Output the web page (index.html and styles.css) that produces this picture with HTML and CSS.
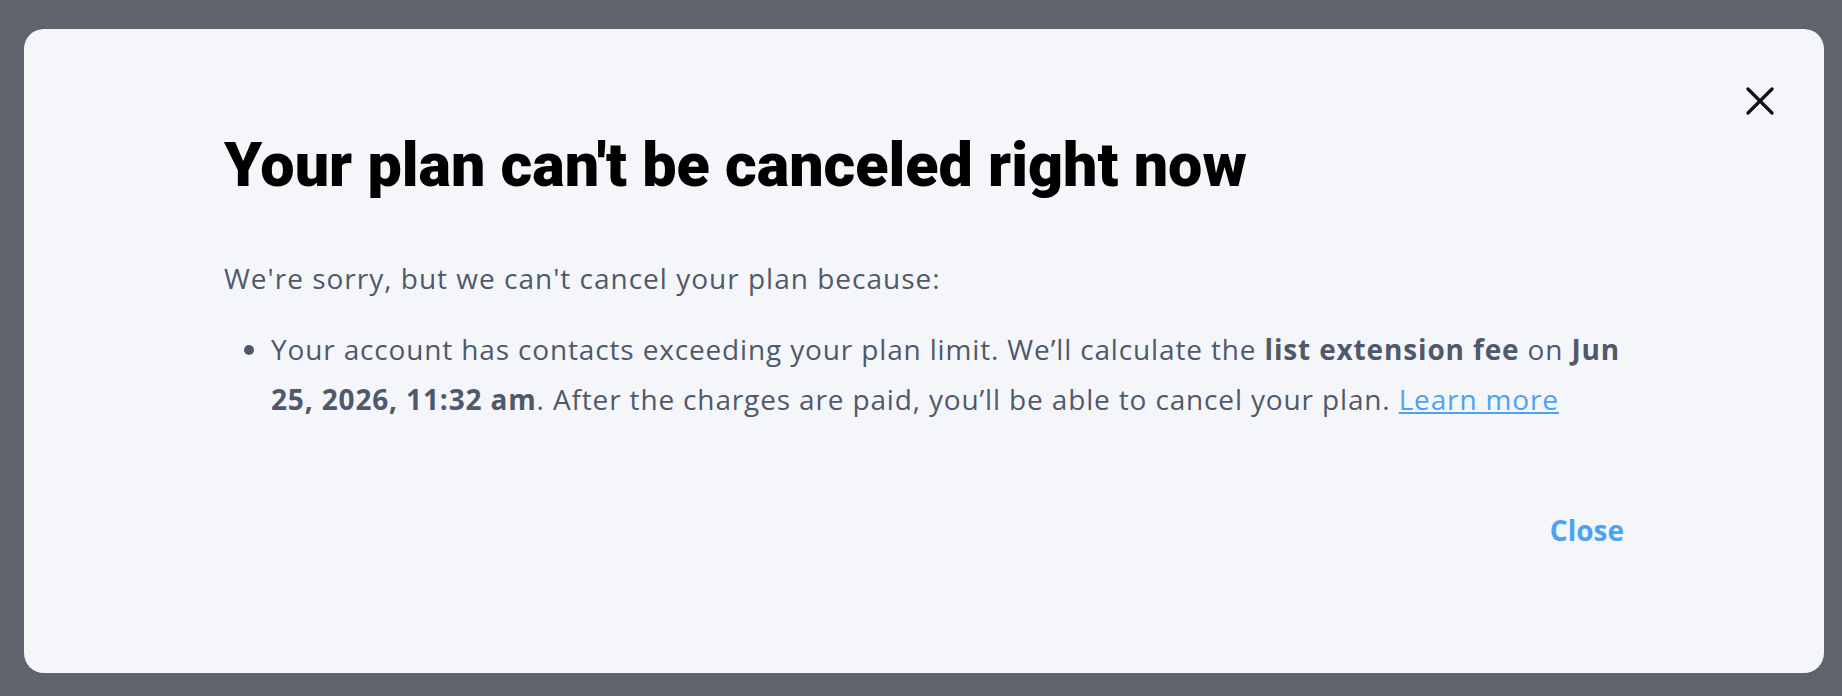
FILE: index.html
```html
<!DOCTYPE html>
<html lang="en">
<head>
    <meta charset="UTF-8">
    <meta name="viewport" content="width=device-width, initial-scale=1.0">
    <title>Cancel plan</title>
    <link rel="stylesheet" href="styles.css">
</head>
<body>
    <div class="modal">
        <button class="modal-close" aria-label="Close">
            <svg width="28" height="28" viewBox="0 0 28 28">
                <path d="M2 2 L26 26 M26 2 L2 26" stroke="#111" stroke-width="3.2" stroke-linecap="round" fill="none"/>
            </svg>
        </button>

        <h1 class="modal-title">Your plan can't be canceled right now</h1>

        <p class="modal-text">We're sorry, but we can't cancel your plan because:</p>
        <ul class="reason-list">
            <li>Your account has contacts exceeding your plan limit. We’ll calculate the <b>list extension fee</b> on <b>Jun 25, 2026, 11:32 am</b>. After the charges are paid, you’ll be able to cancel your plan. <a href="#">Learn more</a></li>
        </ul>

        <div class="modal-footer">
            <button class="text-button">Close</button>
        </div>
    </div>
</body>
</html>
```

FILE: styles.css
```css
html, body {
    height: 696px;
    overflow: hidden;
}
body {
    margin: 0;
    padding: 29px 18px 0 24px;
    box-sizing: border-box;
    background-color: #5f636b;
    font-family: "Open Sans", "Noto Sans", sans-serif;
    color: #4f596b;
}
.modal {
    position: relative;
    height: 644px;
    box-sizing: border-box;
    padding: 96px 174px 0 200px;
    background-color: #f5f6fa;
    border-radius: 20px;
}
.modal-close {
    position: absolute;
    top: 58px;
    right: 50px;
    padding: 0;
    border: none;
    background: none;
    cursor: pointer;
}
.modal-title {
    margin: 0 0 48px 0;
    font-family: Roboto, "Noto Sans", sans-serif;
    font-size: 61px;
    font-weight: 900;
    line-height: 80px;
    color: #000;
}
.modal-text {
    margin: 0 0 21px 0;
    font-size: 28px;
    letter-spacing: 1px;
    line-height: 50px;
}
.reason-list {
    margin: 0;
    padding-left: 47px;
    font-size: 28px;
    letter-spacing: 0.85px;
    line-height: 50px;
}
.reason-list b {
    font-weight: 700;
}
.reason-list a {
    color: #4aa3f5;
}
.modal-footer {
    display: flex;
    justify-content: flex-end;
    margin-top: 87px;
    padding-right: 26px;
}
.text-button {
    padding: 0;
    border: none;
    background: none;
    font-family: inherit;
    font-size: 28px;
    font-weight: 700;
    color: #4aa3f5;
    cursor: pointer;
}
```
